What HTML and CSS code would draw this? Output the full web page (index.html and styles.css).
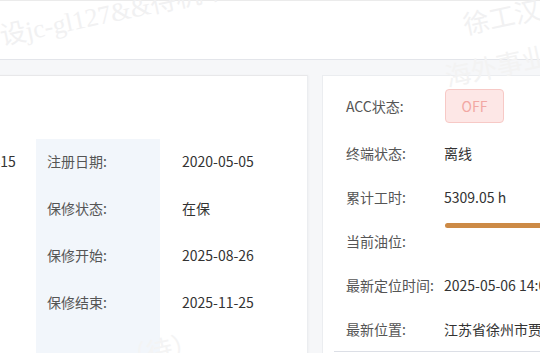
FILE: index.html
```html
<!DOCTYPE html>
<html lang="zh-CN">
<head>
<meta charset="utf-8">
<title>设备详情</title>
<link rel="stylesheet" href="styles.css">
</head>
<body>
<header class="topbar"></header>
<main class="content">
  <section class="card card-info">
    <div class="info-grid">
      <div class="cell label"></div><div class="cell value value-first">2020-04-15</div><div class="cell label">注册日期:</div><div class="cell value">2020-05-05</div>
      <div class="cell label"></div><div class="cell value"></div><div class="cell label">保修状态:</div><div class="cell value">在保</div>
      <div class="cell label"></div><div class="cell value"></div><div class="cell label">保修开始:</div><div class="cell value">2025-08-26</div>
      <div class="cell label"></div><div class="cell value"></div><div class="cell label">保修结束:</div><div class="cell value">2025-11-25</div>
      <div class="cell label"></div><div class="cell value"></div><div class="cell label"></div><div class="cell value"></div>
    </div>
  </section>
  <section class="card card-status">
    <div class="srow srow-first"><span class="slabel">ACC状态:</span><span class="svalue"><span class="tag-off">OFF</span></span></div>
    <div class="srow"><span class="slabel">终端状态:</span><span class="svalue">离线</span></div>
    <div class="srow"><span class="slabel">累计工时:</span><span class="svalue">5309.05 h</span></div>
    <div class="srow"><span class="slabel">当前油位:</span><span class="svalue svalue-bar"><span class="bar"></span></span></div>
    <div class="srow"><span class="slabel">最新定位时间:</span><span class="svalue">2025-05-06 14:08:32</span></div>
    <div class="srow srow-last"><span class="slabel">最新位置:</span><span class="svalue">江苏省徐州市贾汪区</span></div>
  </section>
</main>
<div class="wm wm1">设jc-gl127&amp;&amp;待机中</div>
<div class="wm wm2">徐工汉云</div>
<div class="wm wm3">海外事业</div>
<div class="wm wm4">（待）</div>
</body>
</html>
```
FILE: styles.css
```css
* { box-sizing: border-box; }
html, body { margin: 0; padding: 0; }
body {
  width: 540px;
  height: 353px;
  overflow: hidden;
  background: #f6f7f9;
  font-family: "Noto Sans CJK SC", "Noto Sans", sans-serif;
  font-size: 14px;
  color: #333;
  position: relative;
}
.topbar {
  height: 60px;
  background: #fff;
  border-top: 1px solid #ebebeb;
  border-bottom: 1px solid #e3e5ea;
}
.content {
  display: flex;
  gap: 14px;
  padding-top: 15px;
  margin-left: -228px;
}
.card {
  background: #fff;
  flex: none;
  height: 300px;
}
.card-info {
  width: 536px;
  border-top: 1px solid #e8e8ea;
  border-right: 1px solid #ebedf0;
  box-shadow: 1px 0 2px rgba(0,0,0,0.03);
  padding: 63px 0 0 20px;
}
.info-grid {
  display: grid;
  grid-template-columns: 124px 120px 124px 1fr;
  grid-auto-rows: 47px;
}
.cell {
  display: flex;
  align-items: center;
  padding-bottom: 3px;
  white-space: nowrap;
  overflow: visible;
}
.label {
  background: #f2f6fb;
  color: #555;
  padding-left: 11px;
}
.value {
  padding-left: 22px;
  color: #333;
}
.value-first { padding-left: 28px; }
.card-status {
  width: 300px;
  border-top: 1px solid #ebedf0;
  border-left: 1px solid #ebedf0;
  padding: 11px 0 0 23px;
}
.srow {
  display: flex;
  align-items: center;
  height: 44px;
  white-space: nowrap;
}
.srow-first {
  height: 44px;
  padding-bottom: 6px;
}
.srow-last {
  border-bottom: 1px solid #dcdfe6;
  margin-left: -12px;
  padding-left: 12px;
  height: 45px;
}
.slabel {
  width: 98px;
  flex: none;
  color: #555;
}
.svalue { color: #333; }
.svalue-bar {
  align-self: flex-start;
  padding-top: 4px;
  flex: 1;
}
.bar {
  display: block;
  height: 5px;
  width: 100%;
  background: #cc8a46;
  border-radius: 3px;
  margin-left: 1px;
}
.tag-off {
  display: inline-flex;
  align-items: center;
  justify-content: center;
  width: 59px;
  height: 34px;
  margin-left: 1px;
  background: #fde7e6;
  border: 1px solid #f7c9c6;
  border-radius: 4px;
  color: #f2a7a3;
  font-size: 14px;
}
.wm {
  position: absolute;
  color: #f1f1f2;
  font-family: "Liberation Serif", "Noto Sans CJK SC", serif;
  font-size: 26px;
  white-space: nowrap;
  pointer-events: none;
}
.wm1 { left: -4px; top: 16px; transform: rotate(-12deg); transform-origin: left top; }
.wm2 { left: 462px; top: -6px; transform: rotate(-12deg); }
.wm3 { left: 444px; top: 46px; transform: rotate(-12deg); color: #f3f3f3; }
.wm4 { left: 120px; top: 330px; transform: rotate(-12deg); color: #f4f4f4; }
```
